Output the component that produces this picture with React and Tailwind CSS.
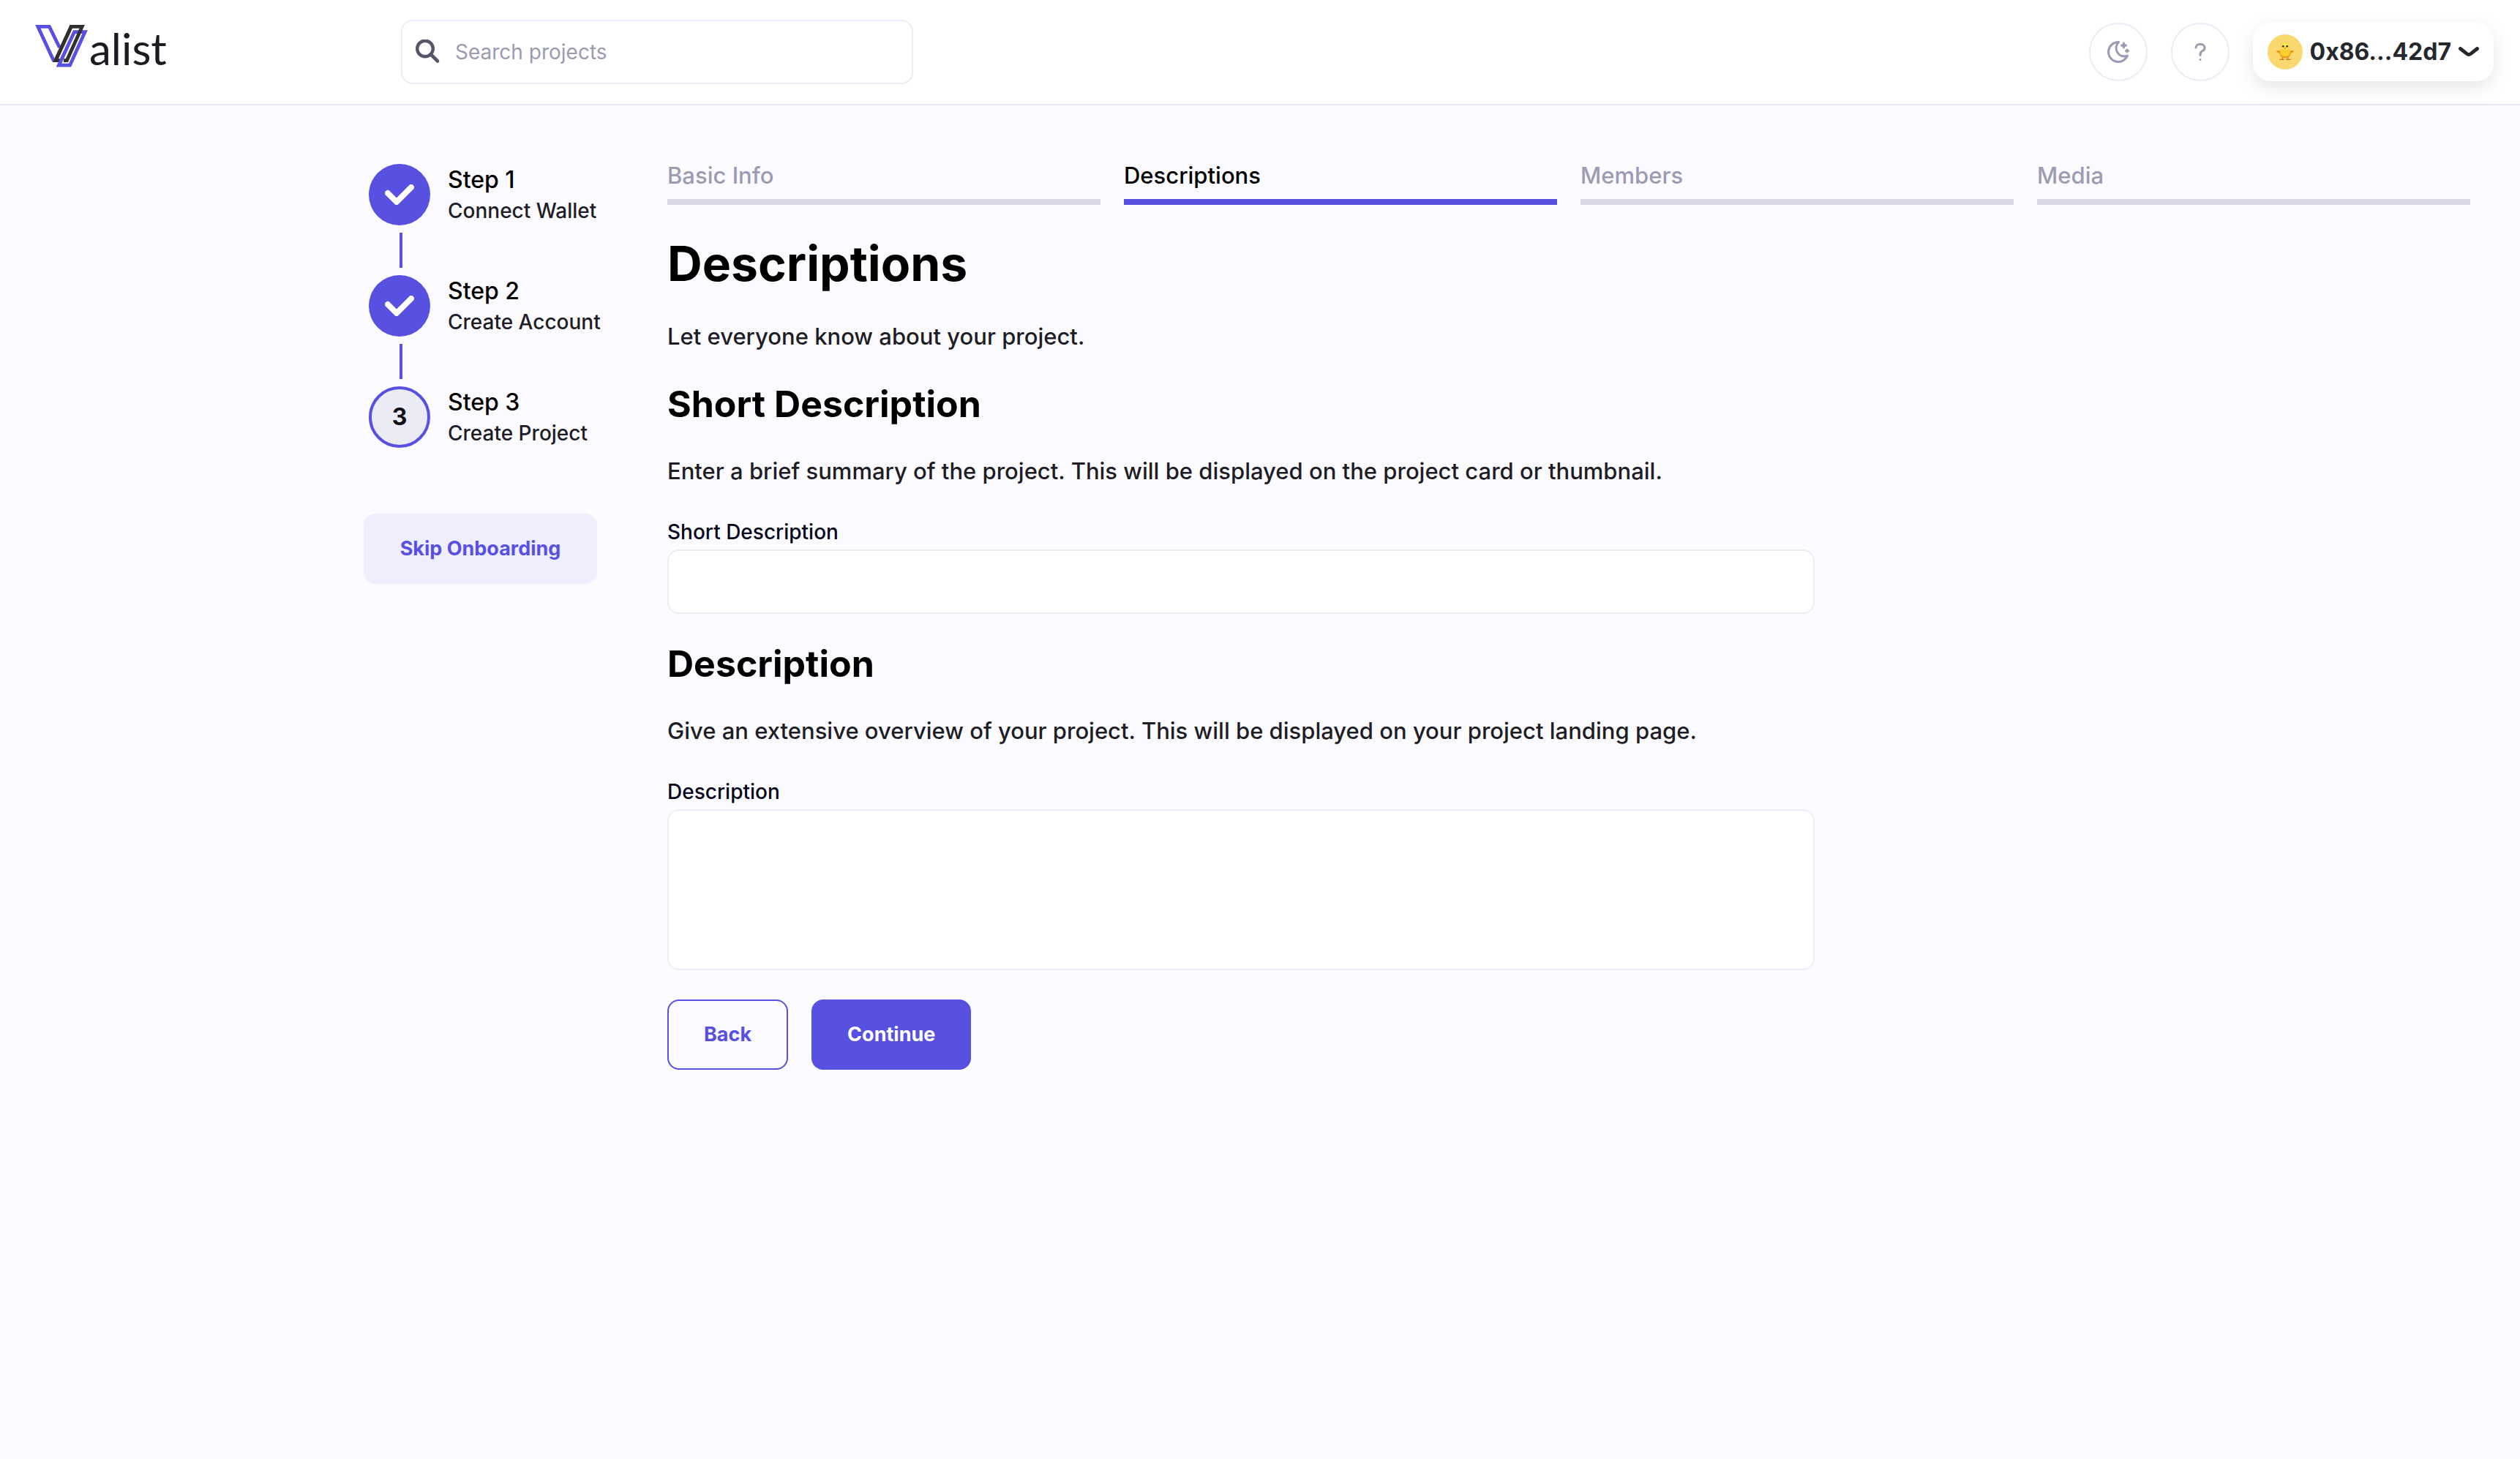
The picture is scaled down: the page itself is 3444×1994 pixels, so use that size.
import React from "react";

const steps = [
  { title: "Step 1", text: "Connect Wallet", done: true },
  { title: "Step 2", text: "Create Account", done: true },
  { title: "Step 3", text: "Create Project", done: false },
];

const tabs = ["Basic Info", "Descriptions", "Members", "Media"];

function LogoMark() {
  return (
    <svg width="72" height="58" viewBox="0 0 72 58" fill="none" strokeWidth="4.8" aria-hidden="true">
      <path d="M25.6 49.6 3.8 2.4H19.4L33.4 31" stroke="#5850e1" />
      <path d="M49.2 2.4H64.2L43.4 48.6H28Z" stroke="#303033" />
      <path d="M53.6 9.6H68.2L47.6 55.2H32.4Z" stroke="#fff" strokeWidth="6.4" />
      <path d="M49.2 2.4H64.2L43.4 48.6H38" stroke="#fff" strokeWidth="6.4" />
      <path d="M49.2 2.4 28 48.6H36" stroke="#303033" />
      <path d="M53.6 9.6H68.2L47.6 55.2H32.4Z" stroke="#5850e1" />
      <path d="M47 2.4H64.2L43.4 48.6H39" stroke="#303033" />
    </svg>
  );
}

function SearchIcon() {
  return (
    <svg width="34" height="34" viewBox="0 0 34 34" fill="none" stroke="#55556b" strokeLinecap="round" aria-hidden="true">
      <circle cx="13" cy="12.5" r="10.8" strokeWidth="4.4" />
      <path d="M21 20.5 30 29.5" strokeWidth="4.6" />
    </svg>
  );
}

function LineIcon({ children }) {
  return (
    <svg width="36" height="36" viewBox="0 0 24 24" fill="none" stroke="#9b9bb1" strokeWidth="2" strokeLinecap="round" strokeLinejoin="round" aria-hidden="true">
      {children}
    </svg>
  );
}

function Chick() {
  return (
    <svg width="48" height="48" viewBox="0 0 48 48" aria-hidden="true">
      <circle cx="24" cy="24" r="24" fill="#f9d96f" />
      <path d="M20.5 30v4M27.5 30v4M17 34.4h5M26 34.4h5" stroke="#c9701c" strokeWidth="1.4" strokeLinecap="round" />
      <path d="M18 23.5C15.5 21.5 13.5 21.8 11.8 22.6 13.5 25.5 16 26.3 19 26ZM30 23.5C32.5 21.5 34.5 21.8 36.2 22.6 34.5 25.5 32 26.3 29 26Z" fill="#ef8f1c" />
      <ellipse cx="24" cy="25.8" rx="7.8" ry="6.6" fill="#ee9a1f" />
      <ellipse cx="24" cy="24.6" rx="7" ry="5.4" fill="#fbd02c" />
      <circle cx="24" cy="17" r="5.7" fill="#f3b52a" />
      <circle cx="24" cy="16.6" r="5.3" fill="#fce94e" />
      <circle cx="21.3" cy="16.3" r="1.4" fill="#3b2a1a" />
      <circle cx="26.7" cy="16.3" r="1.4" fill="#3b2a1a" />
      <path d="M22.4 18.2h3.2L24 20.8Z" fill="#e9731c" />
    </svg>
  );
}

function Field({ id, title, help, multiline }) {
  const box = "mt-1 block w-full rounded-2xl border-2 border-[#ececf6] bg-white px-6 text-[28px] text-[#1e1d26] outline-none";
  return (
    <section className="mt-9">
      <h2 className="text-[50px] leading-[64px] font-bold text-black">{title}</h2>
      <p className="mt-9 text-[31px] leading-[48px] font-medium">{help}</p>
      <div className="mt-[39px] max-w-[1568px]">
        <label htmlFor={id} className="block text-[28px] leading-[40px] font-medium text-[#06061a]">
          {title}
        </label>
        {multiline ? (
          <textarea id={id} className={box + " h-[220px] resize-none"} />
        ) : (
          <input id={id} type="text" className={box + " h-[88px]"} />
        )}
      </div>
    </section>
  );
}

export default function App() {
  return (
    <div className="min-h-screen bg-[#fbfaff] font-['Inter',sans-serif] text-[#1e1d26]">
      <header className="flex h-36 items-center border-b-2 border-[#e6e5f2] bg-white pr-9 pl-12">
        <a href="#home" aria-label="Valist" className="flex w-[500px] shrink-0 items-start pb-2.5">
          <LogoMark />
          <span className="pl-0.5 font-['Lato',sans-serif] text-[60px] leading-[64px] text-[#1c1b24]">alist</span>
        </a>
        <label className="flex h-[88px] w-[700px] items-center gap-5 rounded-2xl border-2 border-[#ececf8] bg-white px-[18px]">
          <SearchIcon />
          <input
            type="text"
            aria-label="Search projects"
            placeholder="Search projects"
            className="min-w-0 flex-1 text-[28px] outline-none placeholder:text-[#9b9bb1]"
          />
        </label>
        <div className="ml-auto flex items-center gap-8">
          <button type="button" aria-label="Toggle dark mode" className="flex size-20 items-center justify-center rounded-full border-2 border-[#ececf8]">
            <LineIcon>
              <path d="M12 3c.132 0 .263 0 .393 0a7.5 7.5 0 0 0 7.92 12.446a9 9 0 1 1 -8.313 -12.454z" />
              <path d="M17 4a2 2 0 0 0 2 2a2 2 0 0 0 -2 2a2 2 0 0 0 -2 -2a2 2 0 0 0 2 -2" />
              <path d="M19 11h2m-1 -1v2" />
            </LineIcon>
          </button>
          <button type="button" aria-label="Help" className="flex size-20 items-center justify-center rounded-full border-2 border-[#ececf8]">
            <LineIcon>
              <path d="M8 8a3.5 3 0 0 1 3.5 -3h1a3.5 3 0 0 1 3.5 3a3 3 0 0 1 -2 3a3 4 0 0 0 -2 4" />
              <path d="M12 19v.01" />
            </LineIcon>
          </button>
          <button
            type="button"
            className="flex h-20 items-center gap-2.5 rounded-3xl bg-white px-5 text-[32px] font-bold text-[#25292e] shadow-[0_8px_24px_rgba(0,0,0,0.1)]"
          >
            <Chick />
            0x86...42d7
            <svg width="28" height="14" viewBox="0 0 28 14" fill="none" stroke="currentColor" strokeWidth="4.8" strokeLinecap="round" aria-hidden="true">
              <path d="M2.5 2.5 11.5 9.6Q14 11.4 16.5 9.6L25.5 2.5" />
            </svg>
          </button>
        </div>
      </header>

      <main className="flex gap-24 pt-[72px] pr-[68px] pb-24 pl-[497px]">
        <aside className="w-[319px] shrink-0 pt-2">
          <ol className="pl-[7px]">
            {steps.map((step, i) => (
              <li key={step.title}>
                {i > 0 && <div className="my-2.5 ml-[42px] h-12 w-1 bg-[#5850e1]" />}
                <div className="flex items-center gap-6">
                  {step.done ? (
                    <span className="flex size-[84px] shrink-0 items-center justify-center rounded-full bg-[#5850e1]">
                      <svg width="40" height="28" viewBox="0 0 40 28" fill="none" stroke="#fff" strokeWidth="8" strokeLinecap="round" strokeLinejoin="round" aria-hidden="true">
                        <path d="M4 12 16 24 36 4" />
                      </svg>
                    </span>
                  ) : (
                    <span className="flex size-[84px] shrink-0 items-center justify-center rounded-full border-4 border-[#5850e1] bg-[#ebebf5] text-[32px] font-bold text-[#111116]">
                      {i + 1}
                    </span>
                  )}
                  <div className="whitespace-nowrap">
                    <p className="text-[32px] leading-[44px] font-medium text-black">{step.title}</p>
                    <p className="text-[28px] leading-[40px] font-medium">{step.text}</p>
                  </div>
                </div>
              </li>
            ))}
          </ol>
          <button type="button" className="mt-[90px] h-24 w-full rounded-2xl bg-[#efeefc] text-[27px] font-bold text-[#5850e1]">
            Skip Onboarding
          </button>
        </aside>

        <div className="min-w-0 flex-1">
          <nav className="grid grid-cols-4 gap-8">
            {tabs.map((tab) => (
              <button
                key={tab}
                type="button"
                className={
                  tab === "Descriptions"
                    ? "border-b-8 border-[#5850e1] pb-2 text-left text-[31px] leading-[48px] font-medium text-black"
                    : "border-b-8 border-[#d9d8e4] pb-2 text-left text-[31px] leading-[48px] font-medium text-[#9b9bb1]"
                }
              >
                {tab}
              </button>
            ))}
          </nav>
          <h1 className="mt-10 text-[66px] leading-[80px] font-bold text-black">Descriptions</h1>
          <p className="mt-9 text-[31px] leading-[48px] font-medium">Let everyone know about your project.</p>
          <form onSubmit={(e) => e.preventDefault()}>
            <Field
              id="short-description"
              title="Short Description"
              help="Enter a brief summary of the project. This will be displayed on the project card or thumbnail."
            />
            <Field
              id="description"
              title="Description"
              help="Give an extensive overview of your project. This will be displayed on your project landing page."
              multiline
            />
            <div className="mt-10 flex gap-8">
              <button type="button" className="h-24 rounded-2xl border-2 border-[#5850e1] px-12 text-[27px] font-bold text-[#5850e1]">
                Back
              </button>
              <button type="submit" className="h-24 rounded-2xl bg-[#5850e1] px-[49px] text-[27px] font-bold text-white">
                Continue
              </button>
            </div>
          </form>
        </div>
      </main>
    </div>
  );
}
